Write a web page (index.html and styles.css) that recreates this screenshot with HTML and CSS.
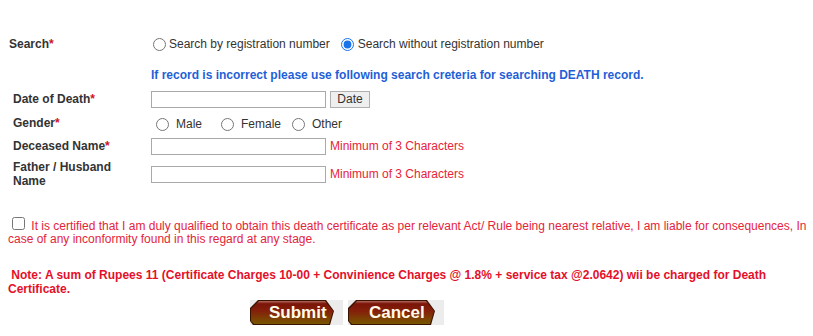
FILE: index.html
```html
<!DOCTYPE html>
<html>
<head>
<meta charset="utf-8">
<title>Death Certificate Search</title>
<link rel="stylesheet" href="styles.css">
</head>
<body>
<div class="page">
  <div class="row row-search">
    <div class="label label-search">Search<span class="req">*</span></div>
    <div class="search-opts">
      <input type="radio" name="mode" class="radio r1" id="m1"><label for="m1">Search by registration number</label>
      <input type="radio" name="mode" class="radio r2" id="m2" checked><label for="m2">Search without registration number</label>
    </div>
  </div>
  <div class="row row-info">
    <div class="label"></div>
    <div class="info">If record is incorrect please use following search creteria for searching DEATH record.</div>
  </div>
  <div class="row row-date">
    <div class="label">Date of Death<span class="req">*</span></div>
    <input type="text" class="field">
    <button type="button" class="date-btn">Date</button>
  </div>
  <div class="row row-gender">
    <div class="label">Gender<span class="req">*</span></div>
    <div class="gender-opts">
      <span class="opt"><input type="radio" name="g" class="gradio" id="g1"><label for="g1">Male</label></span>
      <span class="opt"><input type="radio" name="g" class="gradio" id="g2"><label for="g2">Female</label></span>
      <span class="opt"><input type="radio" name="g" class="gradio" id="g3"><label for="g3">Other</label></span>
    </div>
  </div>
  <div class="row row-name">
    <div class="label">Deceased Name<span class="req">*</span></div>
    <input type="text" class="field">
    <span class="hint">Minimum of 3 Characters</span>
  </div>
  <div class="row row-father">
    <div class="label">Father / Husband Name</div>
    <input type="text" class="field">
    <span class="hint">Minimum of 3 Characters</span>
  </div>
  <p class="declare"><input type="checkbox" class="check"> It is certified that I am duly qualified to obtain this death certificate as per relevant Act/ Rule being nearest relative, I am liable for consequences, In case of any inconformity found in this regard at any stage.</p>
  <p class="note">&nbsp;Note: A sum of Rupees 11 (Certificate Charges 10-00 + Convinience Charges @ 1.8% + service tax @2.0642) wii be charged for Death Certificate.</p>
  <div class="actions">
    <button type="button" class="img-btn btn-submit"><span class="shape"><span class="face"></span></span><span class="btn-text">Submit</span></button>
    <button type="button" class="img-btn btn-cancel"><span class="shape"><span class="face"></span></span><span class="btn-text">Cancel</span></button>
  </div>
</div>
</body>
</html>
```
FILE: styles.css
```css
html, body {
  margin: 0;
  padding: 0;
  background: #ffffff;
}
body {
  font-family: "Liberation Sans", Arial, sans-serif;
  font-size: 12px;
  color: #333333;
}
.page {
  padding: 36px 8px 0 8px;
}
.row {
  display: flex;
  align-items: center;
}
.label {
  width: 143px;
  flex: 0 0 143px;
  box-sizing: border-box;
  padding-left: 5px;
  padding-right: 30px;
  font-weight: bold;
  line-height: 14px;
  color: #333333;
}
.label-search {
  padding-left: 1px;
}
.req {
  color: #d2102a;
}
.row-search {
  height: 16px;
}
.search-opts {
  display: flex;
  align-items: center;
  color: #333333;
}
.radio, .gradio {
  width: 13px;
  height: 13px;
  margin: 0;
  accent-color: #1a73e8;
}
.r1 {
  margin: 0 3px 0 2px;
}
.r2 {
  margin: 0 4px 0 11px;
}
.row-info {
  margin-top: 16px;
  height: 14px;
}
.info {
  font-weight: bold;
  color: #1f5fd8;
  line-height: 14px;
}
.row-date {
  margin-top: 8px;
  height: 18px;
}
.field {
  width: 175px;
  height: 17px;
  box-sizing: border-box;
  border: 1px solid #a9a9a9;
  padding: 0 2px;
  margin: 0;
  font-family: "Liberation Sans", Arial, sans-serif;
  font-size: 12px;
  background: #ffffff;
}
.date-btn {
  margin: 0 0 0 4px;
  width: 40px;
  height: 17px;
  box-sizing: border-box;
  padding: 0;
  border: 1px solid #b0b0b0;
  border-radius: 0;
  background: #efefef;
  color: #333333;
  font-family: "Liberation Sans", Arial, sans-serif;
  font-size: 12px;
  line-height: 15px;
}
.row-gender {
  margin-top: 7px;
  height: 16px;
}
.gender-opts {
  display: grid;
  grid-template-columns: 65px 71px auto;
  align-items: center;
  padding-top: 2px;
}
.opt {
  display: flex;
  align-items: center;
}
.gradio {
  margin: 0 7px 0 5px;
}
.row-name {
  margin-top: 6px;
  height: 18px;
}
.row-father {
  margin-top: 5px;
  height: 28px;
}
.hint {
  margin-left: 4px;
  color: #e8233a;
}
.declare {
  margin: 26px -5px 0 0;
  color: #e4243b;
  line-height: 13px;
}
.check {
  width: 13px;
  height: 13px;
  margin: 3px 3px 3px 4px;
  vertical-align: baseline;
}
.note {
  margin: 22px 0 0 0;
  color: #e4102a;
  font-weight: bold;
  line-height: 14px;
}
.actions {
  display: flex;
  margin-top: 4px;
  padding-left: 242px;
  gap: 5px;
}
.img-btn {
  position: relative;
  display: block;
  height: 25px;
  padding: 0;
  margin: 0;
  border: none;
  background: #ececec;
  cursor: pointer;
}
.btn-submit {
  width: 93px;
}
.btn-cancel {
  width: 96px;
}
.shape {
  position: absolute;
  left: 0;
  top: 0;
  height: 25px;
  background: #3a1200;
  clip-path: polygon(8px 0, calc(100% - 8px) 0, 100% 11px, calc(100% - 4px) 100%, 3px 100%, 0 21px, 0 8px);
}
.btn-submit .shape {
  width: 84px;
}
.btn-cancel .shape {
  width: 87px;
}
.face {
  position: absolute;
  left: 1px;
  top: 1px;
  right: 1px;
  bottom: 1px;
  background: linear-gradient(to bottom, #b46a5e 0%, #7a1508 12%, #84200a 45%, #7d3f04 75%, #765600 100%);
  clip-path: polygon(8px 0, calc(100% - 8px) 0, 100% 10px, calc(100% - 4px) 100%, 3px 100%, 0 20px, 0 8px);
}
.btn-text {
  position: relative;
  display: block;
  font-family: "Liberation Sans", Arial, sans-serif;
  font-weight: bold;
  font-size: 17px;
  line-height: 25px;
  color: #fffbe8;
  text-align: left;
}
.btn-submit .btn-text {
  padding-left: 19px;
}
.btn-cancel .btn-text {
  padding-left: 21px;
}
```
